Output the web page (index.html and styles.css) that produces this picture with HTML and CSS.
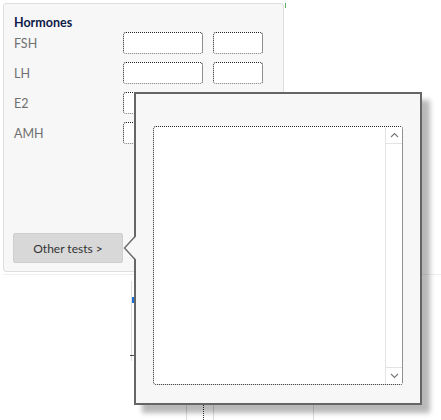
FILE: index.html
```html
<!DOCTYPE html>
<html lang="en">
  <head>
    <meta charset="UTF-8" />
    <title>Hormones</title>
    <link rel="stylesheet" href="styles.css">
  </head>
  <body>
    <div class="page">
      <div class="top-row">
        <section class="panel">
          <h3 class="panel-title">Hormones</h3>
          <div class="test-grid">
            <label>FSH</label>
            <input type="text" class="value" />
            <input type="text" class="unit" />
            <label>LH</label>
            <input type="text" class="value" />
            <input type="text" class="unit" />
            <label>E2</label>
            <input type="text" class="value" />
            <input type="text" class="unit" />
            <label>AMH</label>
            <input type="text" class="value" />
            <input type="text" class="unit" />
          </div>
          <button type="button" class="other-tests">Other tests &gt;</button>
        </section>
        <span class="tick"></span>
      </div>

      <div class="below">
        <div class="side-line">
          <span class="blue-mark"></span>
          <span class="dash"></span>
        </div>
        <div class="cells">
          <span class="cell c1"></span>
          <span class="cell c2"></span>
          <span class="cell c3"></span>
          <span class="cell c4"></span>
        </div>
      </div>

      <div class="popover">
        <svg class="arrow" width="13" height="24" viewBox="0 0 13 24">
          <path d="M13 0.5 L1.5 12 L13 23.5 Z" fill="#f7f7f7" />
          <path d="M12 0.5 L1.5 12 L12 23.5" fill="none" stroke="#6a6a6a" stroke-width="1.4" />
        </svg>
        <div class="listbox">
          <div class="list-area"></div>
          <div class="scrollbar">
            <span class="scroll-btn up">
              <svg width="9" height="6" viewBox="0 0 9 6"><path d="M1 5 L4.5 1.5 L8 5" fill="none" stroke="#777" stroke-width="1.1" /></svg>
            </span>
            <span class="scroll-track"></span>
            <span class="scroll-btn down">
              <svg width="9" height="6" viewBox="0 0 9 6"><path d="M1 1 L4.5 4.5 L8 1" fill="none" stroke="#777" stroke-width="1.1" /></svg>
            </span>
          </div>
        </div>
      </div>
    </div>
  </body>
</html>
```

FILE: styles.css
```css
:root {
  --panel-bg: #f7f7f7;
  --panel-border: #dedede;
  --label-color: #707070;
  --title-color: #0e1a48;
  --frame: #666;
}
body {
  margin: 0;
  padding: 0;
  background: #fff;
  font-family: "Lato", "Noto Sans", sans-serif;
}
.page {
  position: relative;
  width: 441px;
  height: 420px;
  overflow: hidden;
  display: flex;
  flex-direction: column;
}
.top-row {
  display: flex;
  align-items: flex-start;
  padding: 3px 0 0 3px;
}
.panel {
  box-sizing: border-box;
  width: 281px;
  height: 269px;
  background: var(--panel-bg);
  border: 1px solid var(--panel-border);
  border-radius: 3px;
  padding: 11px 9px 8px 9px;
  display: flex;
  flex-direction: column;
}
.panel-title {
  margin: 0 0 1px 1px;
  font-size: 12.5px;
  line-height: 16px;
  font-weight: 700;
  color: var(--title-color);
}
.test-grid {
  display: grid;
  grid-template-columns: 100px 80px 50px;
  grid-auto-rows: 22px;
  column-gap: 10px;
  row-gap: 8px;
  align-items: center;
}
.test-grid label {
  padding-left: 1px;
  font-size: 12.5px;
  color: var(--label-color);
}
.test-grid input {
  box-sizing: border-box;
  height: 22px;
  width: 100%;
  margin: 0;
  padding: 0;
  background: #fff;
  border: 1px dotted #1e1e1e;
  border-bottom-color: #777;
  border-radius: 3px;
}
.other-tests {
  margin-top: auto;
  box-sizing: border-box;
  width: 110px;
  height: 30px;
  background: #d8d8d8;
  border: 1px solid #cfcfcf;
  border-radius: 2px;
  color: #333;
  font-family: "Lato", "Noto Sans", sans-serif;
  font-size: 12px;
  padding: 0;
}
.tick {
  width: 1px;
  height: 5px;
  margin: 0 0 0 1px;
  background: #5fae5f;
}
.below {
  flex: 1;
  margin: 2px 0 0 3px;
  border-top: 1px solid #eee;
  background: #fff;
  display: flex;
  flex-direction: column;
}
.side-line {
  margin: 6px 0 0 128px;
  width: 6px;
  height: 80px;
  border-left: 1px solid #ddd;
}
.blue-mark {
  display: block;
  margin: 16px 0 0 0;
  width: 2px;
  height: 6px;
  background: #1a6fd6;
}
.dash {
  display: block;
  margin: 52px 0 0 -2px;
  width: 5px;
  height: 1px;
  background: #444;
}
.cells {
  margin-top: auto;
  height: 15px;
  display: flex;
}
.cell {
  height: 100%;
  border-left: 1px solid #ddd;
}
.c1 { margin-left: 183px; width: 16px; }
.c2 { width: 9px; border-left: 1px dotted #333; }
.c3 { width: 99px; }
.c4 { width: 10px; }

/* popup with list */
.popover {
  position: absolute;
  left: 134px;
  top: 92px;
  width: 288px;
  height: 313px;
  box-sizing: border-box;
  background: var(--panel-bg);
  border: 2px solid var(--frame);
  box-shadow: 8px 8px 5px rgba(0, 0, 0, 0.28);
  padding: 32px 17px 18px 17px;
  display: flex;
}
.arrow {
  position: absolute;
  left: -13px;
  top: 142px;
}
.listbox {
  flex: 1;
  display: flex;
  background: #fff;
  border: 1px dotted #222;
  border-radius: 3px;
}
.list-area {
  flex: 1;
}
.scrollbar {
  width: 16px;
  border-left: 1px solid #e3e3e3;
  display: flex;
  flex-direction: column;
  background: #fff;
}
.scroll-btn {
  height: 16px;
  display: flex;
  align-items: center;
  justify-content: center;
}
.scroll-btn.up {
  border-bottom: 1px solid #e3e3e3;
}
.scroll-btn.down {
  border-top: 1px solid #e3e3e3;
}
.scroll-track {
  flex: 1;
}
```
